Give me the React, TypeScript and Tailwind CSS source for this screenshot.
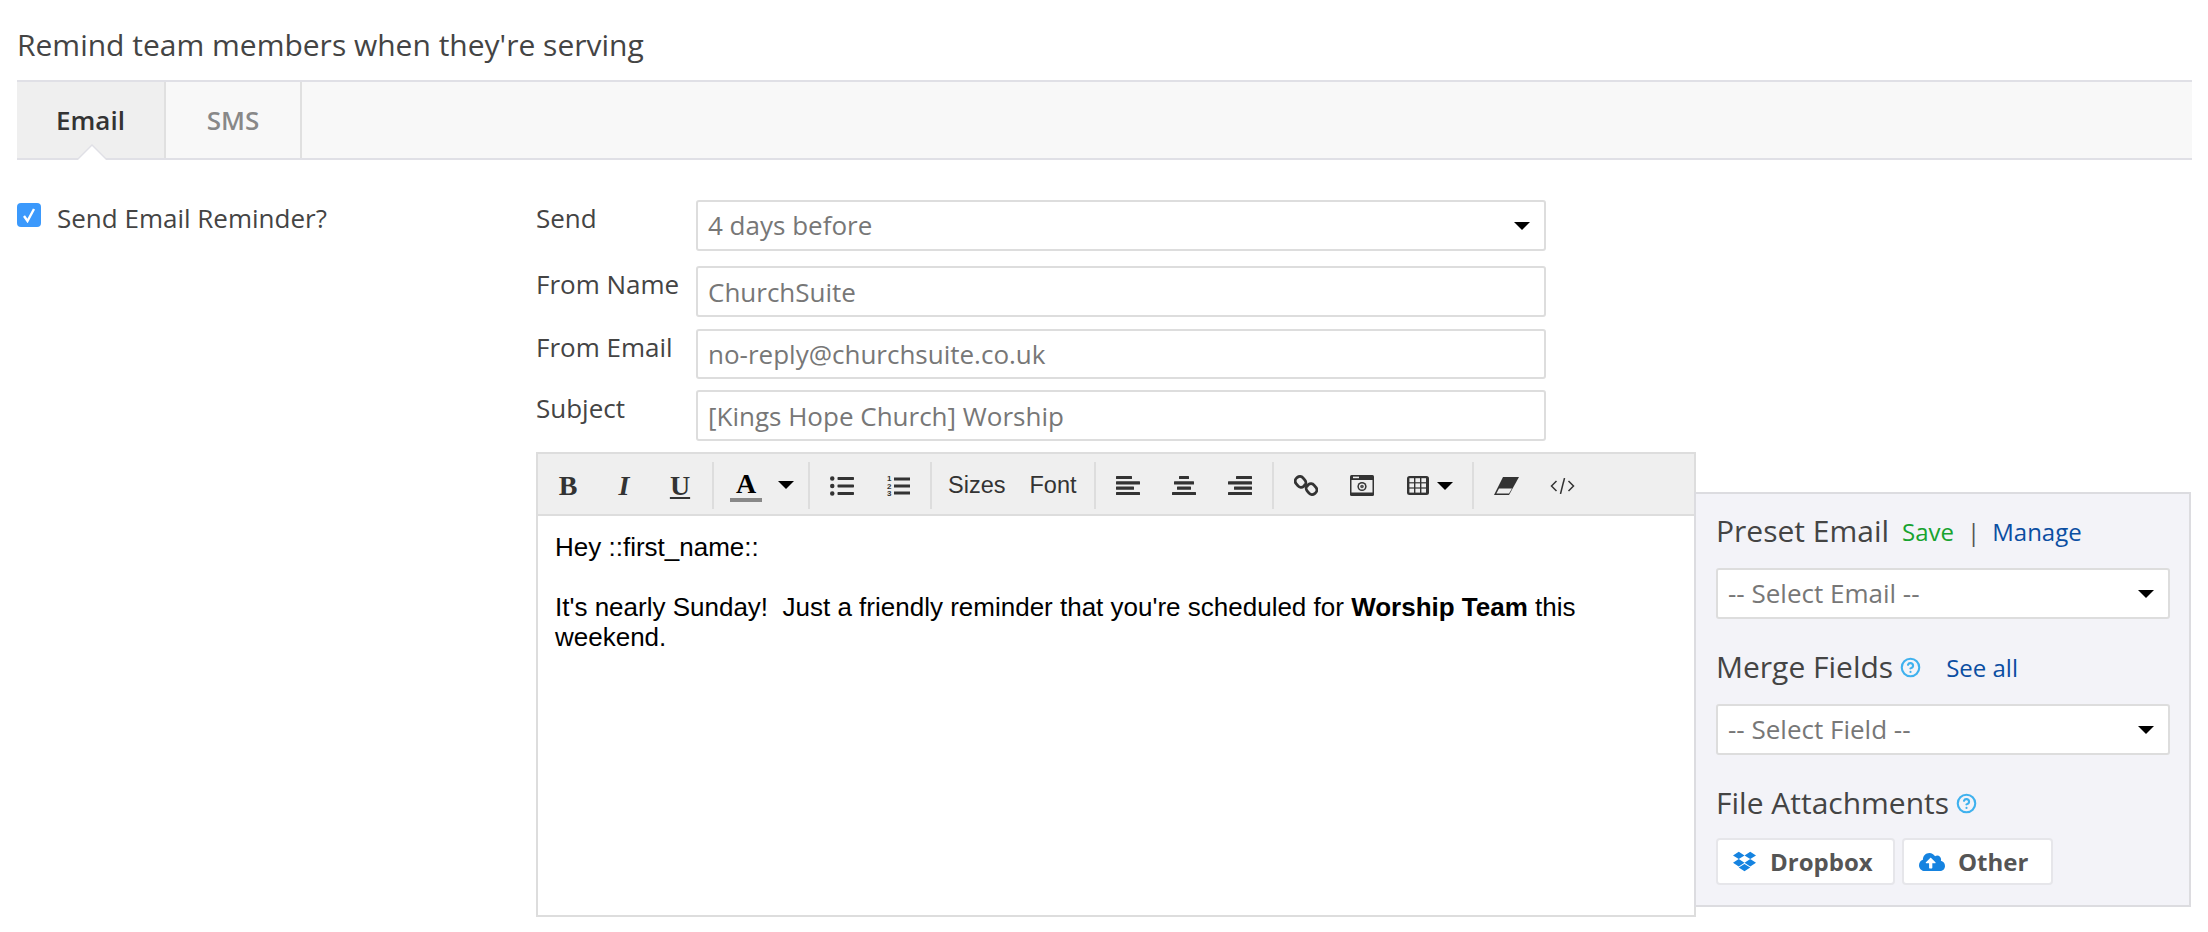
import { ReactNode } from "react";
import { CircleHelp } from "lucide-react";
import { FaCloudUploadAlt, FaDropbox, FaListUl } from "react-icons/fa";

const Caret = ({ big }: { big?: boolean }) => (
  <span
    className={
      big
        ? "block w-0 h-0 border-x-[8px] border-x-transparent border-t-[8px] border-t-black"
        : "block w-0 h-0 border-x-[7px] border-x-transparent border-t-[7px] border-t-[#333]"
    }
  />
);

const Sep = () => <div className="w-[2px] h-[47px] mx-[4px] bg-[#ddd]" />;

const ToolBtn = ({ children, w = "w-14" }: { children: ReactNode; w?: string }) => (
  <div className={`${w} h-[47px] flex items-center justify-center text-[#333]`}>{children}</div>
);

const SerifGlyph = ({ className, children }: { className: string; children: ReactNode }) => (
  <span className={`font-['Liberation_Serif',serif] text-[28px] leading-none ${className}`}>{children}</span>
);

const OrderedList = () => (
  <svg width="24" height="24" viewBox="0 0 24 24" fill="#333">
    <rect x="8" y="3.5" width="16" height="3" />
    <rect x="8" y="10.5" width="16" height="3" />
    <rect x="8" y="17.5" width="16" height="3" />
    <text x="1" y="7" fontSize="8" fontWeight="700" fontFamily="Liberation Sans">1</text>
    <text x="1" y="14.5" fontSize="8" fontWeight="700" fontFamily="Liberation Sans">2</text>
    <text x="1" y="22" fontSize="8" fontWeight="700" fontFamily="Liberation Sans">3</text>
  </svg>
);

const Align = ({ rows }: { rows: [number, number][] }) => (
  <svg width="24" height="19" viewBox="0 0 24 19" fill="#333">
    {rows.map(([x, w], i) => (
      <rect key={i} x={x} y={i * 5.3} width={w} height="3.1" rx="0.5" />
    ))}
  </svg>
);

const LinkIcon = () => (
  <svg width="24" height="23" viewBox="0 0 24 23" fill="none" stroke="#333" strokeWidth="2.8">
    <rect x="2" y="2.4" width="9" height="11" rx="4" transform="rotate(-40 6.5 7.9)" />
    <rect x="13" y="9.6" width="9" height="11" rx="4" transform="rotate(-40 17.5 15.1)" />
    <path d="M9.5 10.5 L14.5 12.5" strokeWidth="2.4" />
  </svg>
);

const CameraIcon = () => (
  <svg width="24" height="21" viewBox="0 0 24 21">
    <rect x="0" y="0" width="24" height="21" rx="1.5" fill="#333" />
    <rect x="3" y="1.6" width="6" height="1.6" fill="#eee" />
    <rect x="1.5" y="5" width="21" height="12.5" fill="#eee" />
    <circle cx="12" cy="11.5" r="4.6" fill="#333" />
    <circle cx="12" cy="11.5" r="3.1" fill="#eee" />
    <circle cx="12" cy="11.5" r="1.8" fill="#555" />
  </svg>
);

const TableIcon = () => (
  <svg width="22" height="19" viewBox="0 0 22 19">
    <rect x="0" y="0" width="22" height="19" rx="2.5" fill="#333" />
    {[0, 1, 2].map((c) =>
      [0, 1, 2].map((r) => (
        <rect key={`${c}-${r}`} x={2.4 + c * 6} y={2.2 + r * 5.2} width="4.6" height="4" fill="#eee" />
      ))
    )}
  </svg>
);

const EraserIcon = () => (
  <svg width="25" height="18" viewBox="0 0 25 18">
    <path d="M9 0 H25 L15 18 H0 Z" fill="#333" />
    <path d="M5 11.5 H18 L15 16.6 H2.4 Z" fill="#eee" />
  </svg>
);

const CodeIcon = () => (
  <svg width="25" height="16" viewBox="0 0 25 16" fill="none" stroke="#333" strokeWidth="1.5">
    <path d="M6.5 3 L1.5 8 L6.5 13" />
    <path d="M18.5 3 L23.5 8 L18.5 13" />
    <path d="M14.5 0 L10.5 16" />
  </svg>
);

const Toolbar = () => (
  <div className="flex items-center h-[62px] pl-[2px] pt-[9px] pb-[6px] bg-[#efefef] border-b-2 border-[#ddd]">
    <ToolBtn>
      <SerifGlyph className="font-bold">B</SerifGlyph>
    </ToolBtn>
    <ToolBtn>
      <SerifGlyph className="italic font-bold">I</SerifGlyph>
    </ToolBtn>
    <ToolBtn>
      <SerifGlyph className="font-bold text-[24px] underline underline-offset-2">U</SerifGlyph>
    </ToolBtn>
    <Sep />
    <div className="w-[86px] h-[47px] flex items-center">
      <div className="w-[32px] ml-[12px] flex flex-col items-center">
        <SerifGlyph className="font-bold">A</SerifGlyph>
        <div className="w-[32px] h-[4px] bg-[#888]" />
      </div>
      <div className="ml-[16px] -mt-[2px]">
        <Caret big />
      </div>
    </div>
    <Sep />
    <ToolBtn>
      <FaListUl size={24} color="#333" />
    </ToolBtn>
    <ToolBtn>
      <OrderedList />
    </ToolBtn>
    <Sep />
    <div className="w-[154px] h-[47px] flex items-center gap-[24px] pl-[12px] font-['Liberation_Sans',sans-serif] text-[23.5px] text-[#333]">
      <span>Sizes</span>
      <span>Font</span>
    </div>
    <Sep />
    <ToolBtn>
      <Align rows={[[0, 16], [0, 24], [0, 18], [0, 24]]} />
    </ToolBtn>
    <ToolBtn>
      <Align rows={[[7, 10], [2, 20], [5, 14], [0, 24]]} />
    </ToolBtn>
    <ToolBtn>
      <Align rows={[[8, 16], [0, 24], [6, 18], [0, 24]]} />
    </ToolBtn>
    <Sep />
    <ToolBtn>
      <LinkIcon />
    </ToolBtn>
    <ToolBtn>
      <CameraIcon />
    </ToolBtn>
    <div className="w-[78px] h-[47px] flex items-center pl-[17px] gap-[8px]">
      <TableIcon />
      <Caret big />
    </div>
    <Sep />
    <ToolBtn>
      <EraserIcon />
    </ToolBtn>
    <ToolBtn>
      <CodeIcon />
    </ToolBtn>
  </div>
);

const fieldClass =
  "w-full h-full bg-white border-2 border-[#ddd] rounded-[3px] px-[10px] text-[26px] text-[#777] outline-none";

const FormRow = ({ label, value, select, className }: { label: string; value: string; select?: boolean; className: string }) => (
  <div className={`flex ${className}`}>
    <div className="w-[160px] leading-[36px] text-[26px] text-[#444]">{label}</div>
    <div className="w-[850px] relative">
      {select ? (
        <div className={`${fieldClass} flex items-center justify-between pr-[14px]`}>
          <span>{value}</span>
          <Caret big />
        </div>
      ) : (
        <input readOnly defaultValue={value} className={fieldClass} />
      )}
    </div>
  </div>
);

const SideSelect = ({ value }: { value: string }) => (
  <div className={`${fieldClass} !h-[51px] !w-[454px] flex items-center justify-between pr-[14px]`}>
    <span>{value}</span>
    <Caret big />
  </div>
);

const Help = () => <CircleHelp size={21} strokeWidth={2.4} color="#3fb1ee" />;

const FileButton = ({ icon, label, className }: { icon: ReactNode; label: string; className: string }) => (
  <div
    className={`h-[47px] flex items-center bg-white border-2 border-[#e6e6ea] rounded-[4px] text-[24px] font-bold text-[#555] ${className}`}
  >
    {icon}
    <span>{label}</span>
  </div>
);

const SidePanel = () => (
  <div className="w-[497px] h-[415px] mt-[40px] -ml-[2px] pl-[20px] bg-[#f3f3f8] border-2 border-[#dcdce0]">
    <div className="flex items-center h-[58px] pt-[14px]">
      <span className="text-[30px] text-[#444]">Preset Email</span>
      <span className="ml-[13px] mt-[4px] text-[24px] text-[#17a32f]">Save</span>
      <span className="ml-[13px] mt-[4px] text-[24px] text-[#555]">|</span>
      <span className="ml-[12px] mt-[4px] text-[24px] text-[#0b4ea2]">Manage</span>
    </div>
    <div className="mt-[16px]">
      <SideSelect value="-- Select Email --" />
    </div>
    <div className="flex items-center h-[40px] mt-[27px]">
      <span className="text-[30px] text-[#444]">Merge Fields</span>
      <span className="ml-[7px] mt-[3px]">
        <Help />
      </span>
      <span className="ml-[25px] mt-[4px] text-[24px] text-[#0b4ea2]">See all</span>
    </div>
    <div className="mt-[18px]">
      <SideSelect value="-- Select Field --" />
    </div>
    <div className="flex items-center h-[40px] mt-[27px]">
      <span className="text-[30px] text-[#444]">File Attachments</span>
      <span className="ml-[7px] mt-[3px]">
        <Help />
      </span>
    </div>
    <div className="flex gap-[7px] mt-[16px]">
      <FileButton
        className="w-[179px] pl-[15px] gap-[14px]"
        icon={<FaDropbox size={23} color="#1583e0" />}
        label="Dropbox"
      />
      <FileButton
        className="w-[151px] pl-[15px] gap-[13px]"
        icon={<FaCloudUploadAlt size={26} color="#1583e0" />}
        label="Other"
      />
    </div>
  </div>
);

const App = () => {
  return (
    <div className="w-[2208px] h-[932px] overflow-hidden bg-white pl-[17px] font-['Open_Sans',sans-serif]">
      <div className="h-[80px] pt-[25px] text-[30px] leading-[40px] text-[#444]">
        Remind team members when they're serving
      </div>

      <div className="w-[2175px] h-[80px] flex bg-[#f8f8f8] border-y-2 border-[#e0e0e6]">
        <div className="relative w-[149px] border-r-2 border-[#e0e0e0] bg-[#efefef] flex items-center justify-center text-[26px] font-semibold text-[#333]">
          Email
          <div className="absolute left-[59px] -bottom-[2px] w-0 h-0 border-x-[16px] border-x-transparent border-b-[16px] border-b-[#e0e0e6]" />
          <div className="absolute left-[61px] -bottom-[2px] w-0 h-0 border-x-[14px] border-x-transparent border-b-[14px] border-b-white" />
        </div>
        <div className="w-[136px] border-r-2 border-[#e0e0e0] flex items-center justify-center text-[26px] font-semibold text-[#888]">
          SMS
        </div>
      </div>

      <div className="flex pt-[40px]">
        <div className="w-[519px] flex items-start gap-[16px]">
          <div className="mt-[3px] w-[24px] h-[24px] rounded-[4px] bg-[#3b99fc] flex items-center justify-center">
            <svg width="14" height="16" viewBox="0 0 14 16" fill="none" stroke="#fff" strokeWidth="2.4">
              <path d="M2 9 L5.5 14 L12 2" />
            </svg>
          </div>
          <span className="leading-[36px] text-[26px] text-[#444]">Send Email Reminder?</span>
        </div>
        <div>
          <FormRow className="h-[51px]" label="Send" value="4 days before" select />
          <FormRow className="h-[51px] mt-[15px]" label="From Name" value="ChurchSuite" />
          <FormRow className="h-[50px] mt-[12px]" label="From Email" value="no-reply@churchsuite.co.uk" />
          <FormRow className="h-[51px] mt-[11px]" label="Subject" value="[Kings Hope Church] Worship" />
          <div className="flex mt-[11px]">
            <div className="w-[1160px] h-[465px] border-2 border-[#ddd]">
              <Toolbar />
              <div className="pl-[17px] pr-[17px] pt-[16px] font-['Liberation_Sans',sans-serif] text-[26px] leading-[30px] text-black">
                <p>Hey ::first_name::</p>
                <p>&nbsp;</p>
                <p>
                  It's nearly Sunday!&nbsp; Just a friendly reminder that you're scheduled for{" "}
                  <b>Worship Team</b> this weekend.
                </p>
              </div>
            </div>
            <SidePanel />
          </div>
        </div>
      </div>
    </div>
  );
};

export default App;
